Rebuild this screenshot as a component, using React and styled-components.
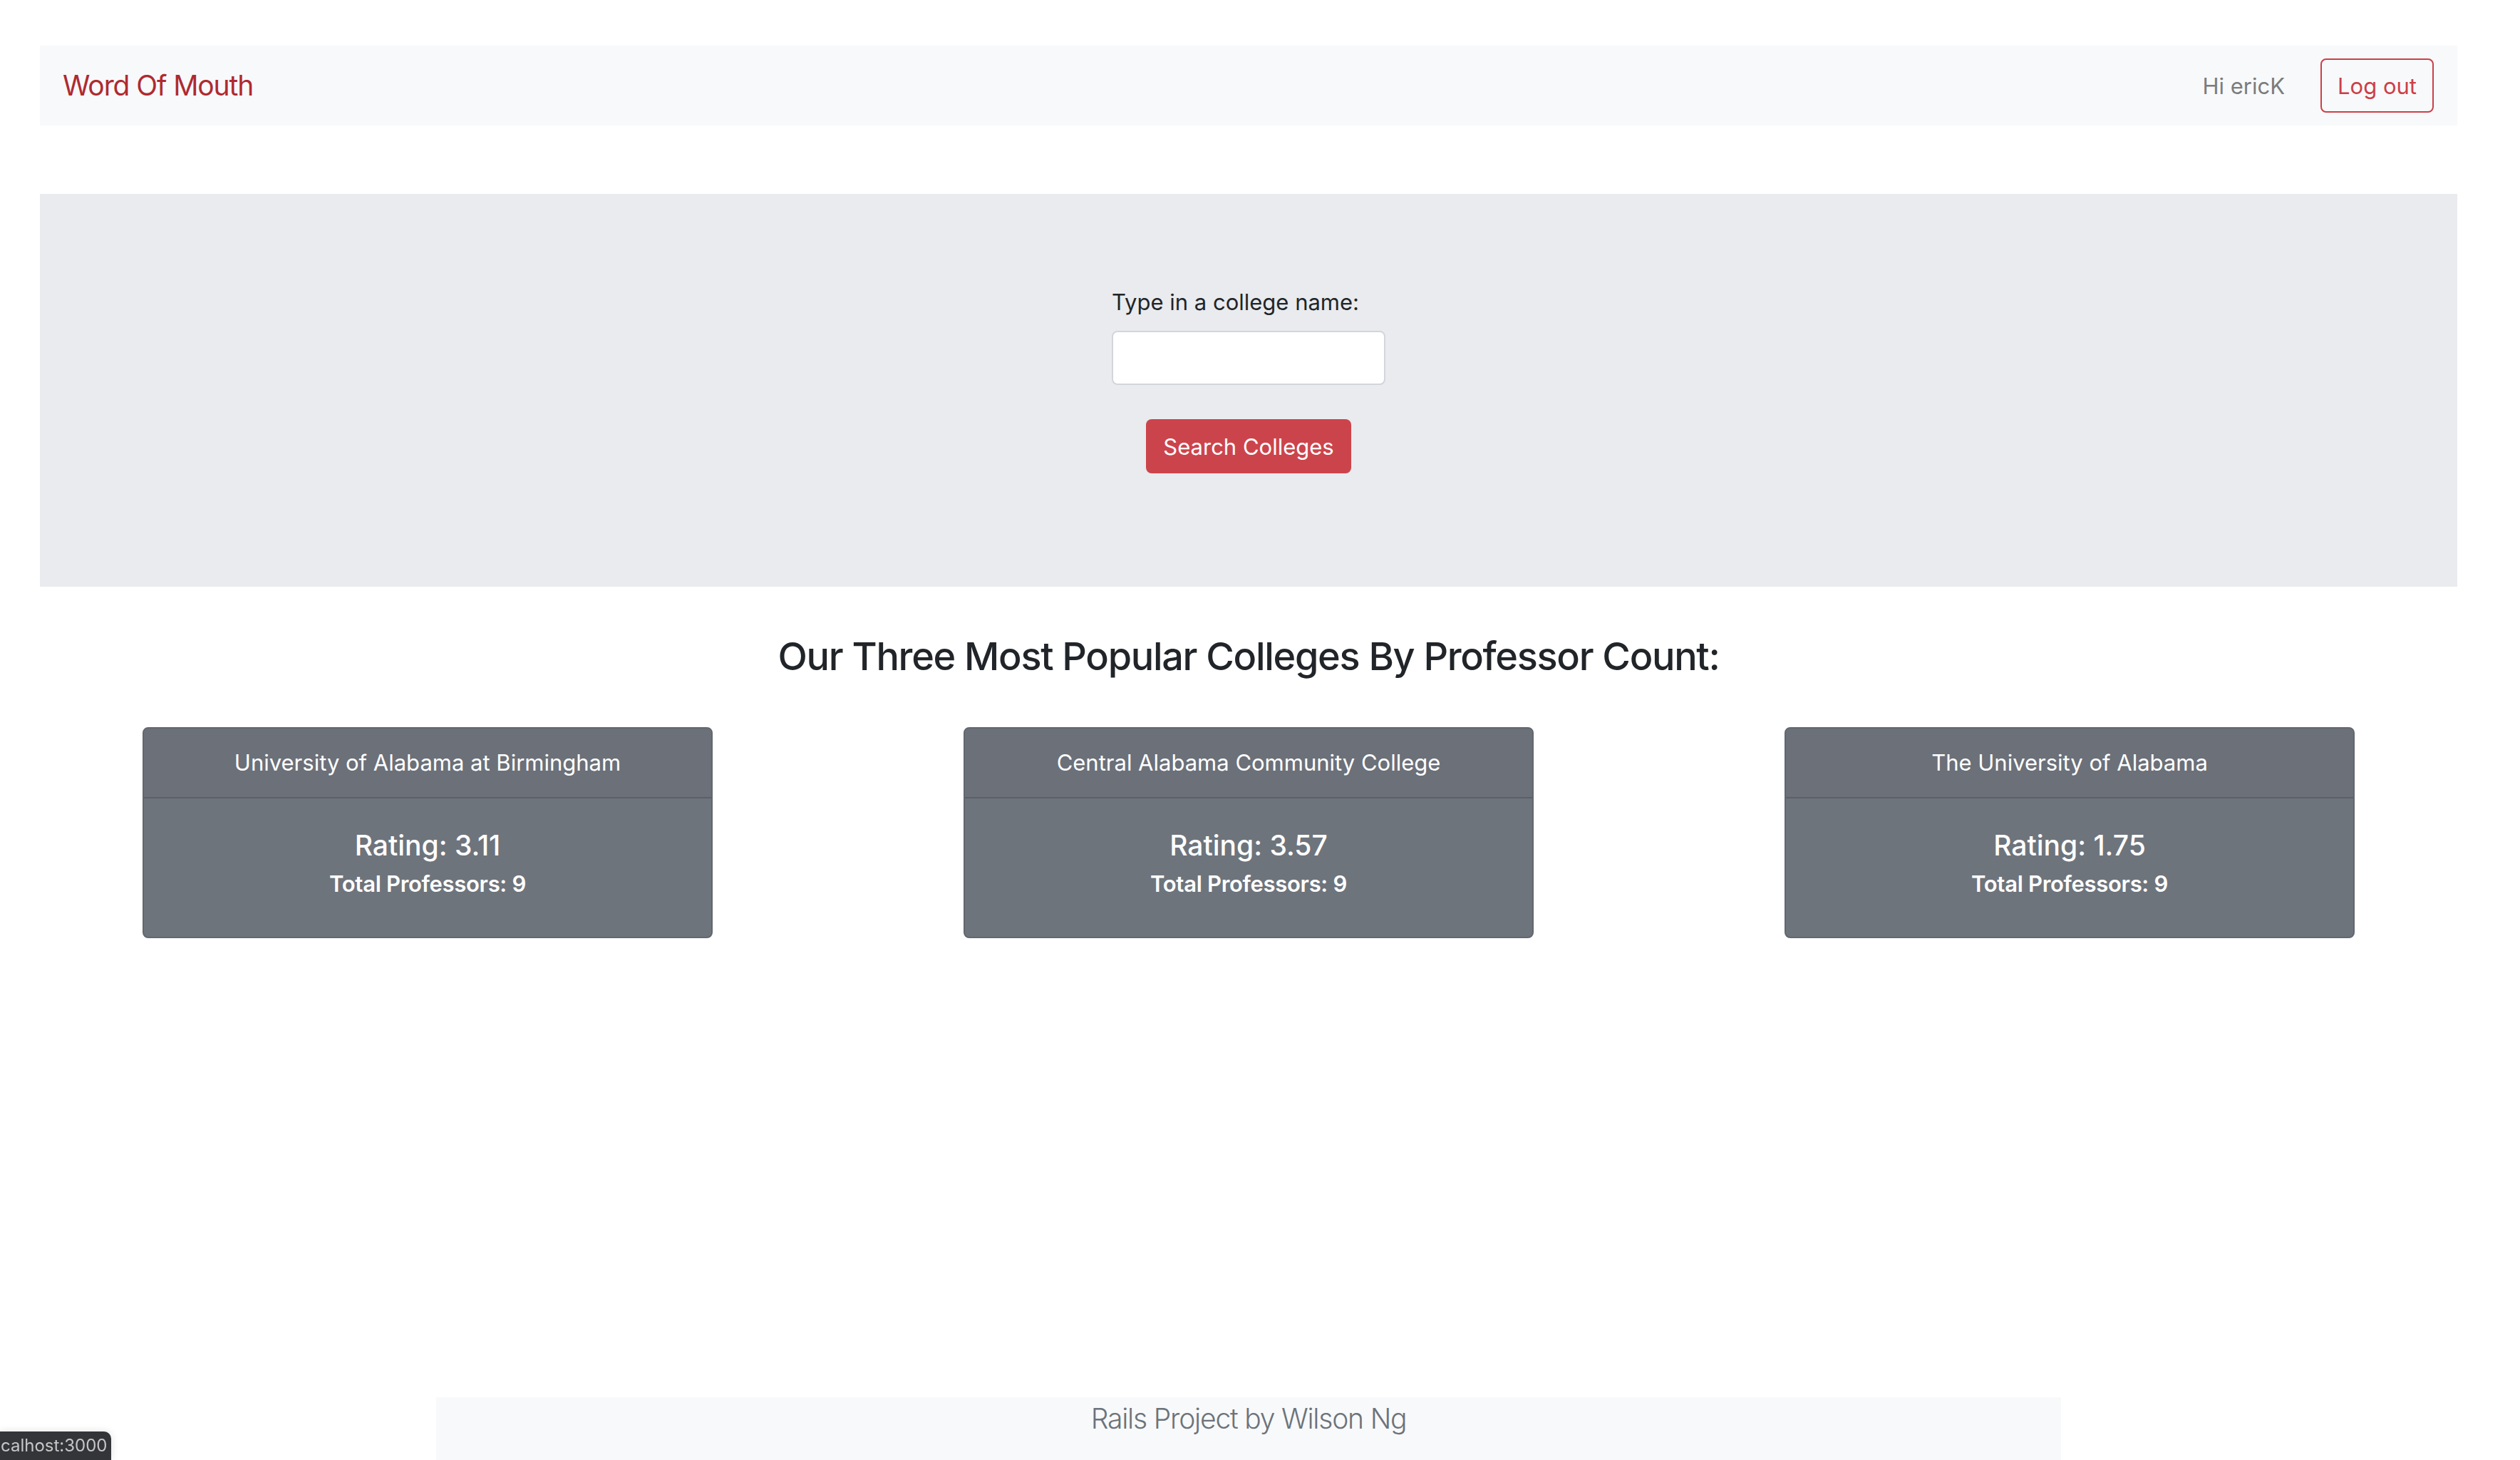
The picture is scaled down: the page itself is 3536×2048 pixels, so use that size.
import React from 'react'
import styled, { createGlobalStyle } from 'styled-components'

const colleges = [
  { name: 'University of Alabama at Birmingham', rating: '3.11', professors: 9 },
  { name: 'Central Alabama Community College', rating: '3.57', professors: 9 },
  { name: 'The University of Alabama', rating: '1.75', professors: 9 }
]

const GlobalStyle = createGlobalStyle`
  html, body {
    margin: 0;
    padding: 0;
    background: #ffffff;
  }
  body {
    font-family: Inter, "Noto Sans", "Liberation Sans", sans-serif;
    color: #212529;
    overflow: hidden;
  }
  * {
    box-sizing: border-box;
  }
`

const Page = styled.div`
  margin: 64px 88px 0 56px;
`

const Navbar = styled.nav`
  height: 112px;
  padding: 0 33px 0 32px;
  background: #f8f9fa;
  display: flex;
  align-items: center;
  justify-content: space-between;
`

const Brand = styled.a`
  font-size: 39px;
  line-height: 48px;
  color: #ae2a31;
  text-decoration: none;
  letter-spacing: -1.1px;
`

const NavRight = styled.div`
  display: flex;
  align-items: center;
  gap: 50px;
`

const Greeting = styled.span`
  font-size: 31px;
  color: #7b7c7d;
`

const OutlineButton = styled.button`
  font-family: inherit;
  height: 76px;
  padding: 0 22px;
  font-size: 31px;
  color: #cc3f48;
  background: transparent;
  border: 2px solid #cc3f48;
  border-radius: 8px;
`

const Jumbotron = styled.section`
  margin-top: 96px;
  padding: 128px 64px 127px;
  background: #e9ebee;
  display: flex;
  justify-content: center;
`

const SearchForm = styled.form`
  width: 384px;
  display: flex;
  flex-direction: column;
  align-items: flex-start;
  margin-bottom: 32px;
`

const Label = styled.label`
  font-size: 31px;
  line-height: 48px;
  margin-bottom: 16px;
  color: #212529;
  white-space: nowrap;
`

const TextInput = styled.input`
  width: 384px;
  height: 76px;
  border: 2px solid #d2d6db;
  border-radius: 8px;
  background: #ffffff;
  font-size: 32px;
  padding: 0 24px;
`

const SolidButton = styled.button`
  font-family: inherit;
  align-self: center;
  margin-top: 48px;
  height: 76px;
  padding: 0 24px;
  font-size: 31px;
  color: #ffffff;
  background: #cc444b;
  border: none;
  border-radius: 8px;
`

const Heading = styled.h3`
  margin: 64px 0 16px;
  font-size: 54px;
  font-weight: 500;
  line-height: 67px;
  text-align: center;
  color: #212529;
  letter-spacing: -1.3px;
`

const CardRow = styled.div`
  margin: 66px -32px 0;
  display: grid;
  grid-template-columns: repeat(3, 1fr);
`

const Col = styled.div`
  display: flex;
  justify-content: center;
`

const Card = styled.div`
  width: 800px;
  background: #6e747c;
  border: 2px solid #62676e;
  border-radius: 8px;
  color: #ffffff;
  text-align: center;
  overflow: hidden;
`

const CardHeader = styled.div`
  padding: 24px 40px;
  font-size: 31px;
  line-height: 48px;
  background: #6b7079;
  border-bottom: 2px solid #5b6067;
`

const CardBody = styled.div`
  padding: 42px 40px 34px;
`

const Rating = styled.h5`
  margin: 0 0 6px;
  font-size: 39px;
  font-weight: 500;
  line-height: 48px;
`

const Total = styled.p`
  margin: 0 0 16px;
  font-size: 31px;
  font-weight: 600;
  line-height: 48px;
  letter-spacing: -0.3px;
`

const Footer = styled.footer`
  width: 2280px;
  margin: 644px auto 0;
  padding: 6px 0 60px;
  background: #f8f9fa;
  text-align: center;
  font-size: 39px;
  font-weight: 300;
  line-height: 48px;
  color: #6c737b;
  letter-spacing: -1.2px;
`

const StatusBubble = styled.div`
  position: fixed;
  left: 0;
  bottom: 0;
  width: 156px;
  height: 40px;
  padding-left: 1px;
  background: #343539;
  border-top-right-radius: 10px;
  box-shadow: 0 0 12px rgba(0, 0, 0, 0.12);
  white-space: nowrap;
  font-size: 24px;
  line-height: 40px;
  color: #c6c6c8;
`

export default function App() {
  return (
    <>
      <GlobalStyle />
      <Page>
        <Navbar>
          <Brand href="#">Word Of Mouth</Brand>
          <NavRight>
            <Greeting>Hi ericK</Greeting>
            <OutlineButton type="button">Log out</OutlineButton>
          </NavRight>
        </Navbar>

        <Jumbotron>
          <SearchForm onSubmit={e => e.preventDefault()}>
            <Label htmlFor="college">Type in a college name:</Label>
            <TextInput id="college" type="text" />
            <SolidButton type="submit">Search Colleges</SolidButton>
          </SearchForm>
        </Jumbotron>

        <Heading>Our Three Most Popular Colleges By Professor Count:</Heading>

        <CardRow>
          {colleges.map(c => (
            <Col key={c.name}>
              <Card>
                <CardHeader>{c.name}</CardHeader>
                <CardBody>
                  <Rating>Rating: {c.rating}</Rating>
                  <Total>Total Professors: {c.professors}</Total>
                </CardBody>
              </Card>
            </Col>
          ))}
        </CardRow>

        <Footer>Rails Project by Wilson Ng</Footer>
      </Page>
      <StatusBubble>calhost:3000</StatusBubble>
    </>
  )
}
